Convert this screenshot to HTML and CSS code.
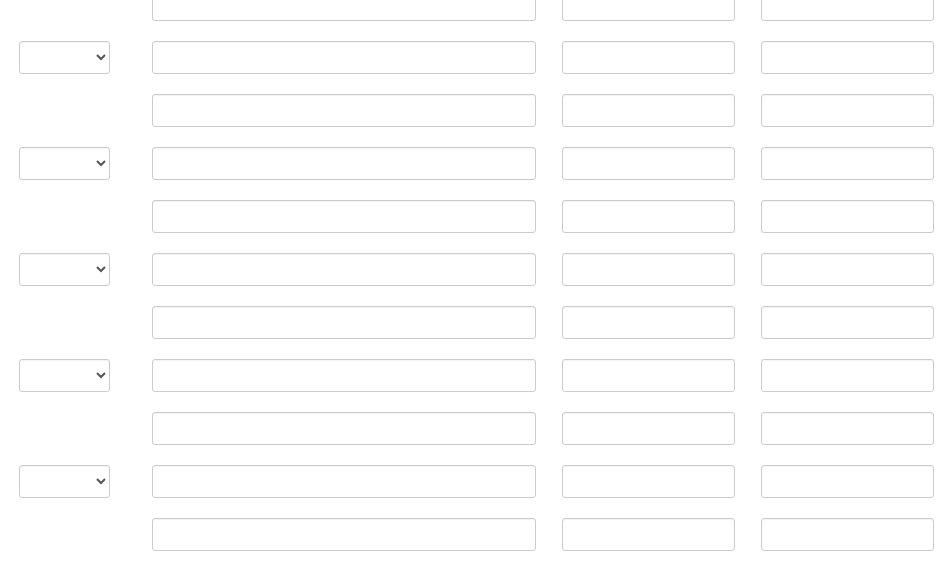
FILE: index.html
```html
<!DOCTYPE html>
<html>
<head>
<meta charset="utf-8">
<link rel="stylesheet" href="styles.css">
</head>
<body>
<div class="form">
  <div class="row"><div class="cell"></div><input class="field wide"><input class="field"><input class="field"></div>
  <div class="row"><select class="pick"><option></option></select><input class="field wide"><input class="field"><input class="field"></div>
  <div class="row"><div class="cell"></div><input class="field wide"><input class="field"><input class="field"></div>
  <div class="row"><select class="pick"><option></option></select><input class="field wide"><input class="field"><input class="field"></div>
  <div class="row"><div class="cell"></div><input class="field wide"><input class="field"><input class="field"></div>
  <div class="row"><select class="pick"><option></option></select><input class="field wide"><input class="field"><input class="field"></div>
  <div class="row"><div class="cell"></div><input class="field wide"><input class="field"><input class="field"></div>
  <div class="row"><select class="pick"><option></option></select><input class="field wide"><input class="field"><input class="field"></div>
  <div class="row"><div class="cell"></div><input class="field wide"><input class="field"><input class="field"></div>
  <div class="row"><select class="pick"><option></option></select><input class="field wide"><input class="field"><input class="field"></div>
  <div class="row"><div class="cell"></div><input class="field wide"><input class="field"><input class="field"></div>
</div>
</body>
</html>
```
FILE: styles.css
```css
html, body {
  margin: 0;
  padding: 0;
  background: #fff;
  font-family: "Liberation Sans", Arial, sans-serif;
  font-size: 14px;
  overflow: hidden;
}
.form {
  margin-top: -12px;
  padding-left: 19px;
  display: flex;
  flex-direction: column;
  gap: 20px;
}
.row {
  display: grid;
  grid-template-columns: 91px 384px 173px 173px;
  column-gap: 26px;
  height: 33px;
}
.row > :nth-child(2) {
  margin-left: 16px;
}
.row {
  grid-template-columns: 91px 400px 173px 173px;
}
.row > .wide {
  width: 384px;
}
.field, .pick {
  box-sizing: border-box;
  height: 33px;
  margin: 0;
  border: 1px solid #cccccc;
  border-radius: 3px;
  background: #fff;
  box-shadow: inset 0 1px 1px rgba(0,0,0,0.05);
  font: inherit;
  padding: 0 8px;
  outline: none;
}
.field {
  width: 173px;
}
.pick {
  width: 91px;
  color: #555;
}
```
